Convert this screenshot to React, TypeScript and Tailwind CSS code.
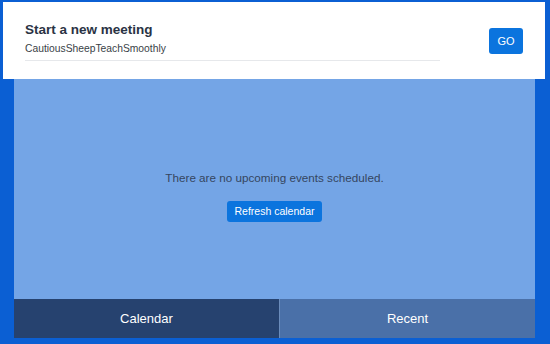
export default function App() {
  return (
    <div
      className="w-[550px] h-[344px] bg-[#0b5fd3] flex flex-col overflow-hidden"
      style={{ fontFamily: '"Liberation Sans", Arial, sans-serif' }}
    >
      <div className="mt-[2px] ml-[3px] mr-[5px] h-[77px] bg-white flex items-start px-[22px] shrink-0">
        <div className="flex-1 pt-[20px]">
          <div className="text-[13.5px] font-bold text-[#2a3344] leading-[16px]">Start a new meeting</div>
          <div className="mt-[5px] w-[415px] text-[10.3px] text-[#3a3f47] leading-[12px] pb-[5px] border-b border-b-[#e6e8eb]">
            CautiousSheepTeachSmoothly
          </div>
        </div>
        <button className="mt-[26px] w-[34px] h-[26px] rounded-[3px] bg-[#0b74de] text-white text-[11px] flex items-center justify-center">
          GO
        </button>
      </div>
      <div className="ml-[14px] mr-[15px] h-[220px] bg-[#74a5e6] flex flex-col items-center pt-[92px] shrink-0">
        <div className="text-[11.7px] text-[#35465f] leading-[14px]">There are no upcoming events scheduled.</div>
        <button className="mt-[16px] h-[21px] px-[8px] rounded-[3px] bg-[#0b74de] text-white text-[10.5px] leading-[13px]">
          Refresh calendar
        </button>
      </div>
      <div className="ml-[14px] mr-[15px] h-[39px] flex shrink-0">
        <div className="w-[265px] bg-[#26426f] text-white text-[13px] flex items-center justify-center">Calendar</div>
        <div className="w-[1px] bg-[#6b8cbb]"></div>
        <div className="flex-1 bg-[#4a70a8] text-white text-[13px] flex items-center justify-center">Recent</div>
      </div>
    </div>
  );
}
